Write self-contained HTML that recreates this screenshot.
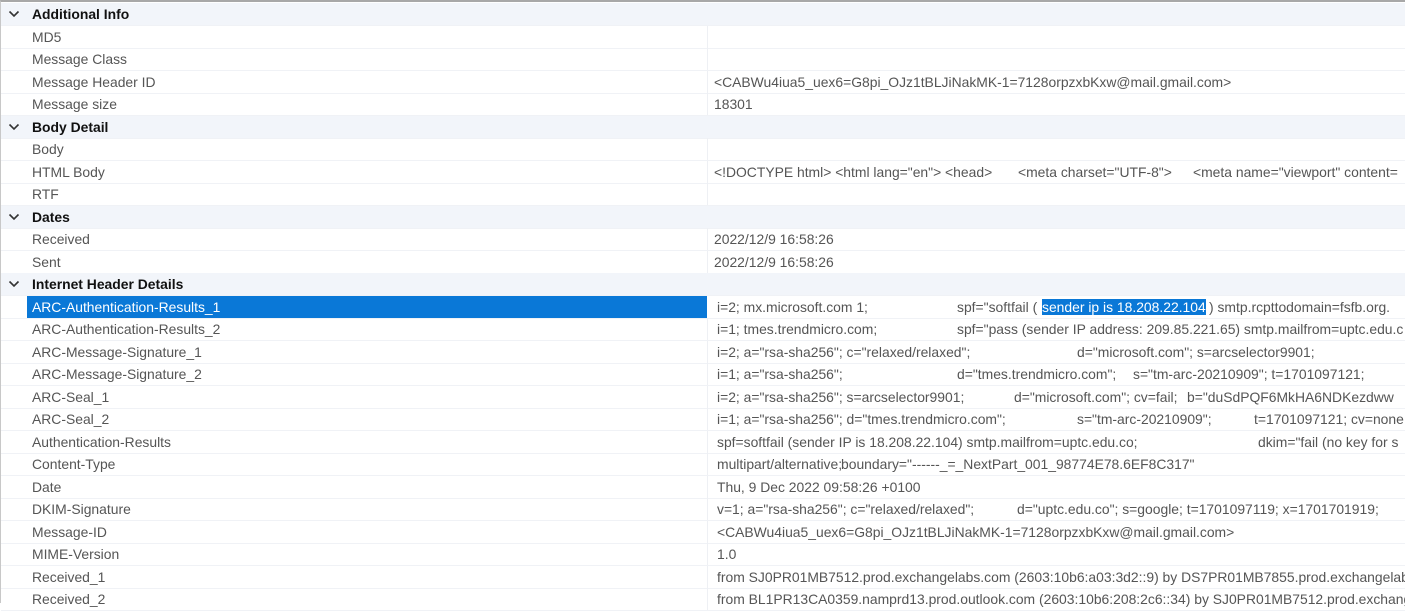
<!DOCTYPE html>
<html><head><meta charset="utf-8"><style>
body{margin:0;width:1405px;height:603px;overflow:hidden;background:#fff;font-family:"Liberation Sans",sans-serif;font-size:13.9px;color:#555;position:relative}
.frame{position:absolute;left:0;top:0;width:1405px;height:603px;border-top:2px solid #a8a8a8;border-left:1px solid #c8c8c8;box-sizing:border-box}
.r{position:absolute;left:1px;width:1404px;height:22px;border-bottom:1px solid #f0f2f6;white-space:nowrap;overflow:hidden}
.h{background:#f2f5fa;color:#111;font-weight:bold}
.h .chev{position:absolute;left:7px;top:5px;width:12px;height:11px}
.h .t{position:absolute;left:31px;top:3px}
.k{position:absolute;left:31px;top:3px}
.v{position:absolute;top:3px}
.div{position:absolute;left:706px;top:0;width:1px;height:22px;background:#eef0f4}
.sel{position:absolute;left:26px;top:0;width:680px;height:22px;background:#0a78d7}
.hl{background:#0a78d7;color:#fff}
</style></head><body>
<div class="frame"></div>

<div class="r h" style="top:3px"><svg class="chev" viewBox="0 0 12 11"><path d="M1.5 3.5 L6 8 L10.5 3.5" fill="none" stroke="#333" stroke-width="1.6"/></svg><span class="t">Additional Info</span></div>
<div class="r" style="top:25.5px"><span class="k">MD5</span><div class="div"></div></div>
<div class="r" style="top:48px"><span class="k">Message Class</span><div class="div"></div></div>
<div class="r" style="top:70.5px"><span class="k">Message Header ID</span><div class="div"></div><span class="v" style="left:713px">&lt;CABWu4iua5_uex6=G8pi_OJz1tBLJiNakMK-1=7128orpzxbKxw@mail.gmail.com&gt;</span></div>
<div class="r" style="top:93px"><span class="k">Message size</span><div class="div"></div><span class="v" style="left:713px">18301</span></div>

<div class="r h" style="top:115.5px"><svg class="chev" viewBox="0 0 12 11"><path d="M1.5 3.5 L6 8 L10.5 3.5" fill="none" stroke="#333" stroke-width="1.6"/></svg><span class="t">Body Detail</span></div>
<div class="r" style="top:138px"><span class="k">Body</span><div class="div"></div></div>
<div class="r" style="top:160.5px"><span class="k">HTML Body</span><div class="div"></div><span class="v" style="left:713px">&lt;!DOCTYPE html&gt; &lt;html lang="en"&gt; &lt;head&gt;</span><span class="v" style="left:1017px">&lt;meta charset="UTF-8"&gt;</span><span class="v" style="left:1192px">&lt;meta name="viewport" content=</span></div>
<div class="r" style="top:183px"><span class="k">RTF</span><div class="div"></div></div>

<div class="r h" style="top:205.5px"><svg class="chev" viewBox="0 0 12 11"><path d="M1.5 3.5 L6 8 L10.5 3.5" fill="none" stroke="#333" stroke-width="1.6"/></svg><span class="t">Dates</span></div>
<div class="r" style="top:228px"><span class="k">Received</span><div class="div"></div><span class="v" style="left:713px">2022/12/9 16:58:26</span></div>
<div class="r" style="top:250.5px"><span class="k">Sent</span><div class="div"></div><span class="v" style="left:713px">2022/12/9 16:58:26</span></div>

<div class="r h" style="top:273px"><svg class="chev" viewBox="0 0 12 11"><path d="M1.5 3.5 L6 8 L10.5 3.5" fill="none" stroke="#333" stroke-width="1.6"/></svg><span class="t">Internet Header Details</span></div>
<div class="r" style="top:295.5px"><div class="sel"></div><span class="k" style="color:#fff">ARC-Authentication-Results_1</span><span class="v" style="left:716px">i=2; mx.microsoft.com 1;</span><span class="v" style="left:956px">spf="softfail (</span><span class="v hl" style="left:1041px">sender ip is 18.208.22.104</span><span class="v" style="left:1208px">) smtp.rcpttodomain=fsfb.org.</span></div>
<div class="r" style="top:318px"><span class="k">ARC-Authentication-Results_2</span><div class="div"></div><span class="v" style="left:716px">i=1; tmes.trendmicro.com;</span><span class="v" style="left:956px">spf="pass (sender IP address: 209.85.221.65) smtp.mailfrom=uptc.edu.c</span></div>
<div class="r" style="top:340.5px"><span class="k">ARC-Message-Signature_1</span><div class="div"></div><span class="v" style="left:716px">i=2; a="rsa-sha256"; c="relaxed/relaxed";</span><span class="v" style="left:1076px">d="microsoft.com"; s=arcselector9901;</span></div>
<div class="r" style="top:363px"><span class="k">ARC-Message-Signature_2</span><div class="div"></div><span class="v" style="left:716px">i=1; a="rsa-sha256";</span><span class="v" style="left:956px">d="tmes.trendmicro.com";</span><span class="v" style="left:1132px">s="tm-arc-20210909"; t=1701097121;</span></div>
<div class="r" style="top:385.5px"><span class="k">ARC-Seal_1</span><div class="div"></div><span class="v" style="left:716px">i=2; a="rsa-sha256"; s=arcselector9901;</span><span class="v" style="left:1013px">d="microsoft.com"; cv=fail;</span><span class="v" style="left:1186px">b="duSdPQF6MkHA6NDKezdww</span></div>
<div class="r" style="top:408px"><span class="k">ARC-Seal_2</span><div class="div"></div><span class="v" style="left:716px">i=1; a="rsa-sha256"; d="tmes.trendmicro.com";</span><span class="v" style="left:1076px">s="tm-arc-20210909";</span><span class="v" style="left:1253px">t=1701097121; cv=none</span></div>
<div class="r" style="top:430.5px"><span class="k">Authentication-Results</span><div class="div"></div><span class="v" style="left:716px">spf=softfail (sender IP is 18.208.22.104) smtp.mailfrom=uptc.edu.co;</span><span class="v" style="left:1257px">dkim="fail (no key for s</span></div>
<div class="r" style="top:453px"><span class="k">Content-Type</span><div class="div"></div><span class="v" style="left:716px">multipart/alternative;</span><span class="v" style="left:840px">boundary="------_=_NextPart_001_98774E78.6EF8C317"</span></div>
<div class="r" style="top:475.5px"><span class="k">Date</span><div class="div"></div><span class="v" style="left:716px">Thu, 9 Dec 2022 09:58:26 +0100</span></div>
<div class="r" style="top:498px"><span class="k">DKIM-Signature</span><div class="div"></div><span class="v" style="left:716px">v=1; a="rsa-sha256"; c="relaxed/relaxed";</span><span class="v" style="left:1016px">d="uptc.edu.co"; s=google; t=1701097119; x=1701701919;</span></div>
<div class="r" style="top:520.5px"><span class="k">Message-ID</span><div class="div"></div><span class="v" style="left:716px">&lt;CABWu4iua5_uex6=G8pi_OJz1tBLJiNakMK-1=7128orpzxbKxw@mail.gmail.com&gt;</span></div>
<div class="r" style="top:543px"><span class="k">MIME-Version</span><div class="div"></div><span class="v" style="left:716px">1.0</span></div>
<div class="r" style="top:565.5px"><span class="k">Received_1</span><div class="div"></div><span class="v" style="left:716px">from SJ0PR01MB7512.prod.exchangelabs.com (2603:10b6:a03:3d2::9) by DS7PR01MB7855.prod.exchangelabs</span></div>
<div class="r" style="top:588px"><span class="k">Received_2</span><div class="div"></div><span class="v" style="left:716px">from BL1PR13CA0359.namprd13.prod.outlook.com (2603:10b6:208:2c6::34) by SJ0PR01MB7512.prod.exchang</span></div>
</body></html>
